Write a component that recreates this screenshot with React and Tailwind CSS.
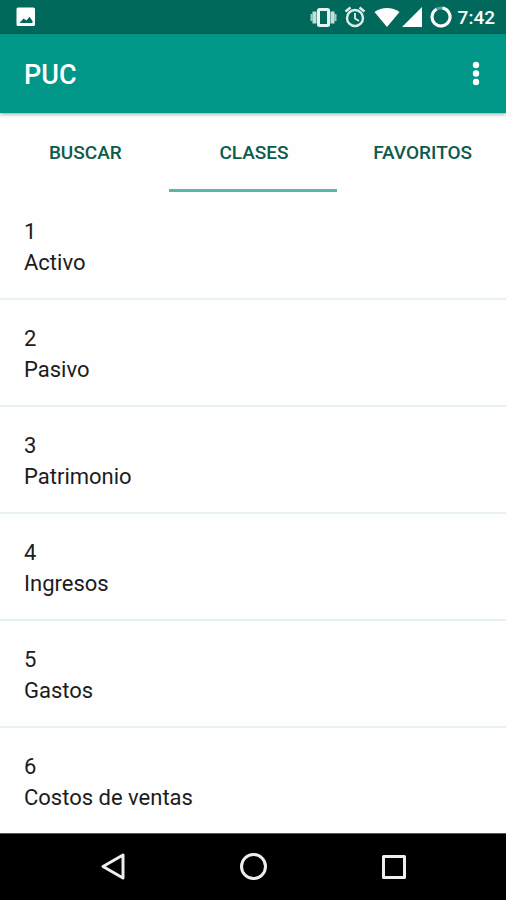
import React, { useState } from "react";

const TABS = ["BUSCAR", "CLASES", "FAVORITOS"];

const CLASES = [
  { code: 1, name: "Activo" },
  { code: 2, name: "Pasivo" },
  { code: 3, name: "Patrimonio" },
  { code: 4, name: "Ingresos" },
  { code: 5, name: "Gastos" },
  { code: 6, name: "Costos de ventas" },
];

const StatusBar = () => (
  <div className="flex h-[34px] shrink-0 items-center justify-between bg-[#00695b] pl-4 pr-[11px] text-white">
    <svg width="20" height="20" viewBox="0 0 20 20" aria-hidden="true">
      <path
        fill="currentColor"
        fillRule="evenodd"
        d="M2 .5h15.5a1.5 1.5 0 0 1 1.5 1.5v15.5a1.5 1.5 0 0 1-1.5 1.5H2a1.5 1.5 0 0 1-1.500-1.500V2A1.500 1.500 0 0 1 2 .5zM3.500 16h13v-2l-3-4.200-3 3.600-3-2z"
      />
    </svg>
    <div className="flex items-center">
      {/* vibrate */}
      <svg width="28" height="22" viewBox="0 0 28 22" aria-hidden="true">
        <path d="M1.5 8v7M25.5 8v7" stroke="#a5cbc5" strokeWidth="2" />
        <path d="M4.500 5.500v12M22.500 5.500v12" stroke="#c5dfdb" strokeWidth="4" />
        <rect x="8.500" y="3.500" width="10" height="16" rx="1" fill="none" stroke="#e8f3f1" strokeWidth="3" />
      </svg>
      {/* alarm */}
      <svg className="ml-[6px]" width="22" height="22" viewBox="0 0 22 22" aria-hidden="true">
        <g fill="none" stroke="#dfeeeb" strokeWidth="2.4">
          <circle cx="11" cy="12" r="8" />
          <path d="M1.500 5.500l5-4M20.500 5.500l-5-4" />
          <path d="M11 7v5.500l4 2.500" strokeWidth="1.8" />
        </g>
      </svg>
      {/* wifi */}
      <svg className="ml-2" width="26" height="22" viewBox="0 0 26 22" aria-hidden="true">
        <path fill="currentColor" d="M.5 6C8 .5 18 .5 25.500 6L13 21z" />
      </svg>
      {/* signal */}
      <svg className="ml-[2px]" width="20" height="22" viewBox="0 0 20 22" aria-hidden="true">
        <path fill="currentColor" d="M0 21L20 1v20z" />
      </svg>
      {/* battery */}
      <svg className="ml-2" width="22" height="22" viewBox="0 0 22 22" aria-hidden="true">
        <circle cx="11" cy="11" r="9" fill="none" stroke="#5fa198" strokeWidth="3" />
        <path d="M12.500 2.100A9 9 0 1 1 6.500 3.200" fill="none" stroke="currentColor" strokeWidth="3" />
      </svg>
      <span className="ml-[6px] pt-[2px] text-[19px] font-medium leading-6">7:42</span>
    </div>
  </div>
);

const AppBar = () => (
  <header className="z-10 flex h-[79px] shrink-0 items-center justify-between bg-[#009788] pl-6 pr-4 text-white shadow-[0_1px_4px_rgba(0,0,0,0.4)]">
    <h1 className="pt-[2px] text-[27px] font-medium leading-8">PUC</h1>
    <button type="button" aria-label="Más opciones" className="flex h-10 w-7 items-center justify-center">
      <svg width="8" height="26" viewBox="0 0 8 26" fill="currentColor" aria-hidden="true">
        <circle cx="4" cy="4" r="3.2" />
        <circle cx="4" cy="12.5" r="3.2" />
        <circle cx="4" cy="21" r="3.2" />
      </svg>
    </button>
  </header>
);

const NavBar = () => (
  <nav className="flex h-[67px] shrink-0 items-center justify-center gap-[101px] border-t border-[#555555] bg-black text-[#eeeeee]">
    <button type="button" aria-label="Atrás" className="flex h-10 w-10 items-center justify-center">
      <svg width="30" height="30" viewBox="0 0 30 30" fill="none" stroke="currentColor" strokeWidth="3" strokeLinejoin="round" aria-hidden="true">
        <path d="M26 3v23L6 14.5z" />
      </svg>
    </button>
    <button type="button" aria-label="Inicio" className="flex h-10 w-10 items-center justify-center">
      <svg width="30" height="30" viewBox="0 0 30 30" fill="none" stroke="currentColor" strokeWidth="3" aria-hidden="true">
        <circle cx="15.5" cy="14.5" r="12" />
      </svg>
    </button>
    <button type="button" aria-label="Recientes" className="flex h-10 w-10 items-center justify-center">
      <svg width="30" height="30" viewBox="0 0 30 30" fill="none" stroke="currentColor" strokeWidth="3" strokeLinejoin="round" aria-hidden="true">
        <rect x="4.5" y="4.5" width="21" height="21" />
      </svg>
    </button>
  </nav>
);

const App = () => {
  const [activeTab, setActiveTab] = useState("CLASES");

  return (
    <div className="flex min-h-screen flex-col bg-[#fefefe] font-['Roboto',sans-serif]">
      <StatusBar />
      <AppBar />

      <div role="tablist" className="grid h-[79px] shrink-0 grid-cols-3">
        {TABS.map((tab) => (
          <button
            key={tab}
            type="button"
            role="tab"
            aria-selected={tab === activeTab}
            onClick={() => setActiveTab(tab)}
            className={`border-b-3 pt-1 pl-[2px] text-[19px] font-medium leading-6 text-[#0b5c4c] ${
              tab === activeTab ? "border-[#5cb5a7]" : "border-transparent"
            }`}
          >
            {tab}
          </button>
        ))}
      </div>

      <ul className="flex-1 pt-px">
        {CLASES.map((item) => (
          <li
            key={item.code}
            className="flex h-[107px] flex-col border-b-2 border-[#e6f2f0] px-6 pt-[23px] text-[22px] leading-[31px] text-[#1c1c1c] last:h-[105px] last:border-transparent"
          >
            <span>{item.code}</span>
            <span>{item.name}</span>
          </li>
        ))}
      </ul>

      <NavBar />
    </div>
  );
};

export default App;
